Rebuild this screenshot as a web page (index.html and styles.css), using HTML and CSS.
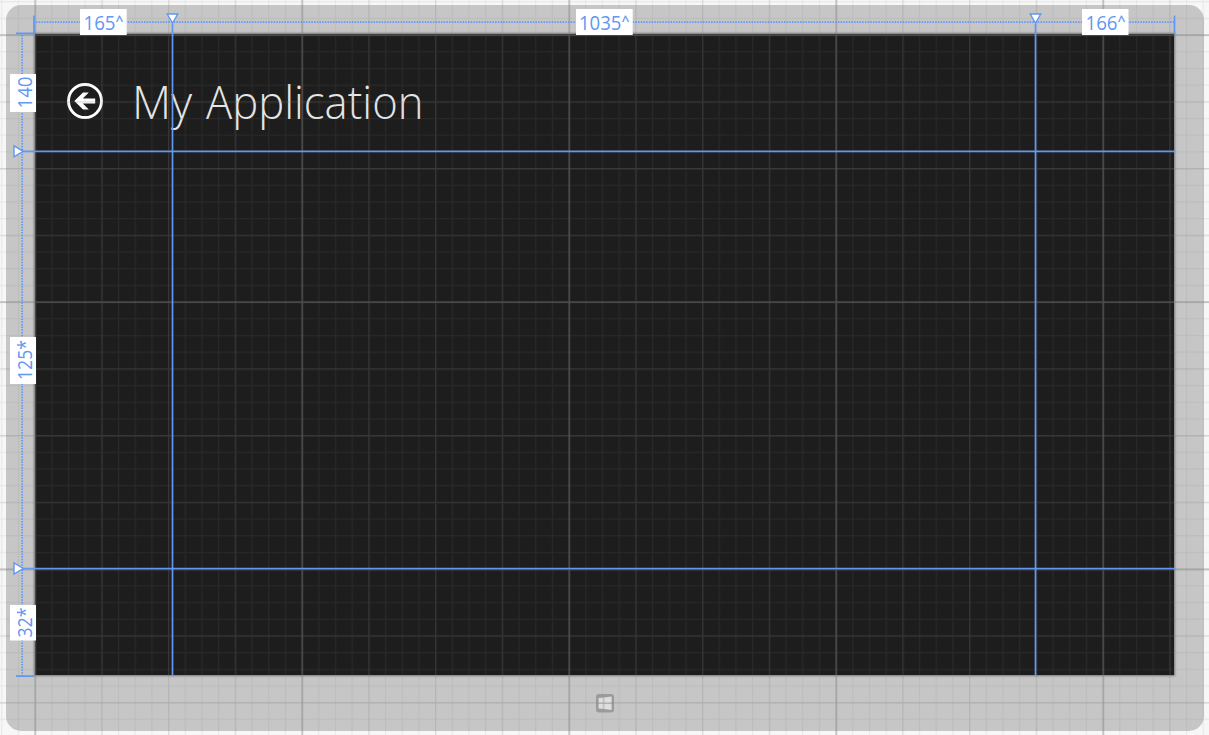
FILE: index.html
```html
<!DOCTYPE html>
<html lang="en">
<head>
<meta charset="utf-8">
<title>Designer</title>
<link rel="stylesheet" href="styles.css">
</head>
<body>
<main class="surface">
  <section class="device">
    <div class="artboard">
      <header class="page-header">
        <svg class="back" viewBox="0 0 38 38" aria-label="Back">
          <circle cx="19" cy="19" r="16.5"/>
          <path d="M8.3 19 17 10.4h5.8L16.8 16.6H29.2v4.8H16.8l6 6.2H17z"/>
        </svg>
        <svg class="title" viewBox="0 0 300 60"><text x="-3" y="40" textLength="60" lengthAdjust="spacingAndGlyphs">My</text><text x="71" y="40" textLength="217.5" lengthAdjust="spacingAndGlyphs">Application</text></svg>
      </header>
    </div>
    <footer class="bezel">
      <svg class="start" viewBox="0 0 20 20" aria-label="Start">
        <rect x="1" y="1" width="18" height="18.6" rx="3"/>
        <path d="M3.6 5 8.6 4.6V10H3.6zM9.2 4.5 16.6 3.6V10H9.2zM3.6 10.6H8.6V16L3.6 15.4zM9.2 10.6H16.6V17L9.2 16.1z"/>
      </svg>
    </footer>
  </section>
  <svg class="overlay" viewBox="0 0 1209 735">
    <defs>
      <pattern id="minor" x="34.5" y="34.5" width="16.6875" height="16.6875" patternUnits="userSpaceOnUse"><path class="minor" d="M0 .6H16.7M.6 0V16.7"/></pattern>
      <pattern id="medium" x="34.5" y="34.5" width="66.75" height="66.75" patternUnits="userSpaceOnUse"><path class="medium" d="M0 .75H67M.75 0V67"/></pattern>
    </defs>
    <rect width="1209" height="735" fill="url(#minor)"/>
    <rect width="1209" height="735" fill="url(#medium)"/>
    <path class="half" d="M0 168.8H1209M0 436H1209M0 703.3H1209"/>
    <path class="major" d="M35.3 0V735M302.3 0V735M569.3 0V735M836.3 0V735M1103.3 0V735M0 35.2H1209M0 302.2H1209M0 569.5H1209"/>
    <g class="guides">
      <path class="dots" d="M36 22.2H1174M22.2 35V676"/>
      <path d="M172.5 24V675M1035.5 24V675M23 151.3H1175M23 568.5H1175"/>
      <path d="M34 15.5V34M16 33.4H34M1174.5 15.5V34M16 676.2H34"/>
      <path class="handle" d="M167.2 14H177.8L172.5 23zM1030.2 14H1040.8L1035.5 23zM14 145.8V156.8L23.2 151.3zM14 563V574L23.2 568.5z"/>
    </g>
    <g class="labels">
      <rect x="80" y="9" width="46.7" height="26"/>
      <text x="83.5" y="30" textLength="32" lengthAdjust="spacingAndGlyphs">165</text><text class="caret" x="115.5" y="26">^</text>
      <rect x="576" y="9" width="56.7" height="26"/>
      <text x="579" y="30" textLength="42.5" lengthAdjust="spacingAndGlyphs">1035</text><text class="caret" x="621.5" y="26">^</text>
      <rect x="1082" y="9" width="46.5" height="26"/>
      <text x="1085.5" y="30" textLength="32" lengthAdjust="spacingAndGlyphs">166</text><text class="caret" x="1117.5" y="26">^</text>
      <rect x="10" y="74" width="26" height="38"/>
      <text transform="translate(31.5 108.5) rotate(-90)" textLength="32" lengthAdjust="spacingAndGlyphs">140</text>
      <rect x="10" y="337" width="26" height="47"/>
      <text transform="translate(31.5 380) rotate(-90)" textLength="40" lengthAdjust="spacingAndGlyphs">125*</text>
      <rect x="10" y="605" width="26" height="35.5"/>
      <text transform="translate(31.5 637.5) rotate(-90)" textLength="30" lengthAdjust="spacingAndGlyphs">32*</text>
    </g>
  </svg>
</main>
</body>
</html>
```

FILE: styles.css
```css
body {
  margin: 0;
  font-family: "Open Sans", "Noto Sans", sans-serif;
}

.surface {
  position: relative;
  box-sizing: border-box;
  width: 1209px;
  height: 735px;
  padding: 5px 5px 4px 5.5px;
  overflow: hidden;
  background: #f7f7f7;
}

.device {
  box-sizing: border-box;
  display: flex;
  flex-direction: column;
  width: 1198px;
  height: 726px;
  padding: 29px 29.5px 0 29.5px;
  border-radius: 15px;
  background: #c6c6c6;
}

.artboard {
  height: 641px;
  background: #1d1d1d;
  box-shadow: 0 0 2px 1px #777;
}

.page-header {
  display: flex;
  padding: 48px 0 0 30.6px;
}

.back {
  width: 38px;
  height: 38px;
  fill: #fff;
}

.back circle {
  fill: none;
  stroke: #fff;
  stroke-width: 2.9;
}

.title {
  width: 300px;
  height: 60px;
  margin: -3.5px 0 0 31.9px;
  overflow: visible;
  fill: #e6e6e6;
  font-size: 46px;
  font-weight: 300;
}

.bezel {
  display: flex;
  flex: 1;
  justify-content: center;
  padding-top: 18px;
}

.start {
  width: 20px;
  height: 20px;
  fill: #dedede;
}

.start rect {
  fill: #9b9b9b;
}

.overlay {
  position: absolute;
  inset: 0;
  width: 1209px;
  height: 735px;
  fill: none;
}

.minor,
.medium,
.half,
.major {
  fill: none;
  stroke: #808080;
}

.minor {
  stroke-width: 1.2;
  stroke-opacity: 0.12;
}

.medium {
  stroke-width: 1.5;
  stroke-opacity: 0.13;
}

.half {
  stroke-width: 1.4;
  stroke-opacity: 0.08;
}

.major {
  stroke-width: 1.8;
  stroke-opacity: 0.33;
}

.guides {
  stroke: #6297f2;
  stroke-width: 1.7;
}

.guides .dots {
  stroke-width: 1.7;
  stroke-dasharray: 1.5 1.2;
}

.guides .handle {
  fill: #fff;
  stroke-width: 1.4;
}

.labels rect {
  fill: #fff;
}

.labels text {
  fill: #6297f2;
  font-size: 19.5px;
}

.labels .caret {
  font-size: 14px;
  font-weight: 600;
}
```
